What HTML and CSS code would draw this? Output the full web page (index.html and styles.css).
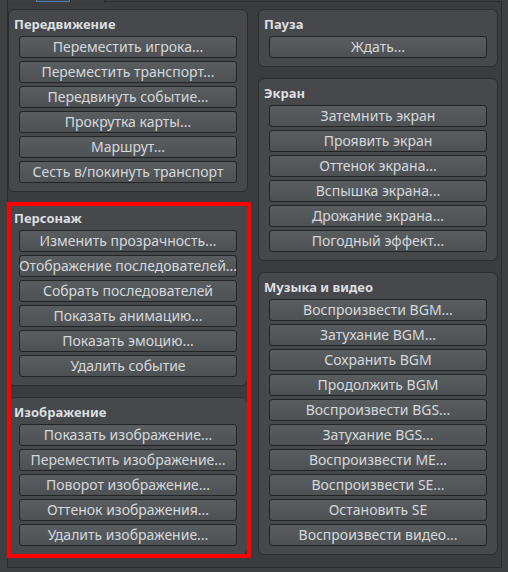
FILE: index.html
```html
<!DOCTYPE html>
<html lang="ru">
<head>
<meta charset="utf-8">
<title>Команды событий</title>
<link rel="stylesheet" href="styles.css">
</head>
<body>
<div class="tabs">
  <div class="tab"></div>
  <div class="tab tab-active"></div>
  <div class="tab"></div>
</div>
<div class="frame">
  <div class="columns">
    <div class="column">
      <div class="panel">
        <div class="panel-title">Передвижение</div>
        <div class="buttons">
          <div class="btn">Переместить игрока...</div>
          <div class="btn">Переместить транспорт...</div>
          <div class="btn">Передвинуть событие...</div>
          <div class="btn">Прокрутка карты...</div>
          <div class="btn">Маршрут...</div>
          <div class="btn">Сесть в/покинуть транспорт</div>
        </div>
      </div>
      <div class="panel">
        <div class="panel-title">Персонаж</div>
        <div class="buttons">
          <div class="btn">Изменить прозрачность...</div>
          <div class="btn">Отображение последователей...</div>
          <div class="btn">Собрать последователей</div>
          <div class="btn">Показать анимацию...</div>
          <div class="btn">Показать эмоцию...</div>
          <div class="btn">Удалить событие</div>
        </div>
      </div>
      <div class="panel">
        <div class="panel-title">Изображение</div>
        <div class="buttons">
          <div class="btn">Показать изображение...</div>
          <div class="btn">Переместить изображение...</div>
          <div class="btn">Поворот изображение...</div>
          <div class="btn">Оттенок изображения...</div>
          <div class="btn">Удалить изображение...</div>
        </div>
      </div>
    </div>
    <div class="column">
      <div class="panel">
        <div class="panel-title">Пауза</div>
        <div class="buttons">
          <div class="btn">Ждать...</div>
        </div>
      </div>
      <div class="panel">
        <div class="panel-title">Экран</div>
        <div class="buttons">
          <div class="btn">Затемнить экран</div>
          <div class="btn">Проявить экран</div>
          <div class="btn">Оттенок экрана...</div>
          <div class="btn">Вспышка экрана...</div>
          <div class="btn">Дрожание экрана...</div>
          <div class="btn">Погодный эффект...</div>
        </div>
      </div>
      <div class="panel">
        <div class="panel-title">Музыка и видео</div>
        <div class="buttons">
          <div class="btn">Воспроизвести BGM...</div>
          <div class="btn">Затухание BGM...</div>
          <div class="btn">Сохранить BGM</div>
          <div class="btn">Продолжить BGM</div>
          <div class="btn">Воспроизвести BGS...</div>
          <div class="btn">Затухание BGS...</div>
          <div class="btn">Воспроизвести ME...</div>
          <div class="btn">Воспроизвести SE...</div>
          <div class="btn">Остановить SE</div>
          <div class="btn">Воспроизвести видео...</div>
        </div>
      </div>
    </div>
  </div>
  <div class="highlight"></div>
</div>
</body>
</html>
```

FILE: styles.css
```css
html, body {
  margin: 0;
  padding: 0;
}
body {
  width: 508px;
  height: 572px;
  overflow: hidden;
  background: #3d3f41;
  font-family: "Noto Sans", "Open Sans", "DejaVu Sans", sans-serif;
  font-size: 14px;
  color: #d2d6da;
}
.tabs {
  display: flex;
  height: 2px;
  margin-left: 7px;
  margin-bottom: -1px;
  position: relative;
  z-index: 2;
}
.tab {
  box-sizing: border-box;
  width: 29px;
  height: 2px;
  border-left: 1px solid #2b2d2f;
  background: #3d3f41;
}
.tab + .tab {
  width: 34px;
}
.tab:last-child {
  width: 35px;
  border-right: 1px solid #2b2d2f;
}
.tab-active {
  border: 1px solid #4d7cb6;
  border-top: none;
  background: #44474a;
}
.frame {
  position: relative;
  box-sizing: border-box;
  width: 495px;
  height: 567px;
  margin-left: 7px;
  border: 1px solid #2b2d2f;
  background: #3a3c3e;
  padding-top: 7px;
}
.columns {
  display: grid;
  grid-template-columns: 240px 240px;
  column-gap: 10px;
}
.column {
  display: flex;
  flex-direction: column;
  gap: 11px;
}
.panel {
  box-sizing: border-box;
  border: 1px solid #2a2c2e;
  border-radius: 6px;
  background: #46484b;
  padding: 0 10px 8px 5px;
}
.panel-title {
  padding: 4px 0 2px 0;
  line-height: 20px;
  font-weight: bold;
  font-size: 13px;
  color: #dcdfe2;
}
.buttons {
  display: flex;
  flex-direction: column;
  gap: 3px;
  padding-left: 5px;
}
.btn {
  box-sizing: border-box;
  height: 22px;
  line-height: 20px;
  border: 1px solid #222426;
  border-radius: 3px;
  background: linear-gradient(#5a5d60, #4e5154);
  text-align: center;
  white-space: nowrap;
  display: flex;
  justify-content: center;
  color: #d4d8dc;
}
.highlight {
  position: absolute;
  box-sizing: border-box;
  left: -1px;
  top: 200px;
  width: 244px;
  height: 356px;
  border: 4px solid #ff0000;
  pointer-events: none;
}
```
